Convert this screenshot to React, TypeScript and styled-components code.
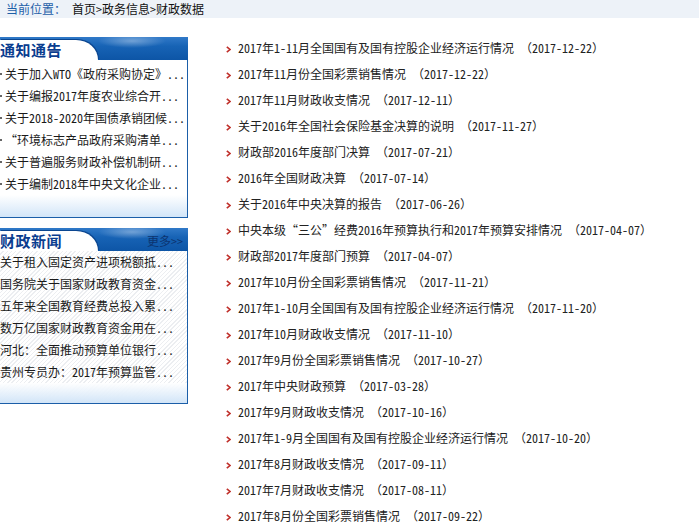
import styled, { createGlobalStyle } from "styled-components";

const GlobalStyle = createGlobalStyle`
  html, body {
    margin: 0;
    padding: 0;
    background: #fff;
  }
  body {
    font-family: "Noto Sans CJK SC", "Noto Sans", sans-serif;
    font-size: 12px;
    color: #222;
    font-feature-settings: "hwid";
  }
`;

const Breadcrumb = styled.div`
  height: 18px;
  line-height: 18px;
  background: #edf2f8;
  padding-left: 6px;
  white-space: nowrap;
`;

const CrumbLabel = styled.span`
  color: #1d5fa8;
`;

const CrumbPath = styled.span`
  margin-left: 6px;
  color: #111;
`;

const Main = styled.div`
  display: flex;
  align-items: flex-start;
`;

const Sidebar = styled.div`
  width: 188px;
  flex: none;
  padding-top: 19px;
  display: flex;
  flex-direction: column;
  gap: 10px;
`;

const Panel = styled.div`
  display: flex;
  flex-direction: column;
`;

const PanelHeader = styled.div`
  height: 23px;
  display: flex;
  align-items: flex-end;
  justify-content: space-between;
  background:
    radial-gradient(ellipse 34px 7px at 132px 4px, rgba(255, 255, 255, 0.35), transparent),
    linear-gradient(to bottom, #3079c8 0%, #1763b5 40%, #0d55a6 100%);
`;

const Tab = styled.div`
  width: 98px;
  height: 20px;
  background: #fff;
  border-top-right-radius: 22px 20px;
  box-shadow: 1px -1px 0 #0b4690;
`;

const PanelTitle = styled.span`
  display: block;
  line-height: 20px;
  font-size: 15px;
  font-weight: bold;
  color: #0a3d8f;
  letter-spacing: 0.5px;
`;

const More = styled.span`
  line-height: 20px;
  padding-right: 5px;
  color: #0c3470;
`;

const PanelBody = styled.div<{ $hatched?: boolean; $padTop: number }>`
  padding-top: ${(p) => p.$padTop}px;
  border-right: 1px solid #1b5ea8;
  border-bottom: 1px solid #1b5ea8;
  background: ${(p) =>
    p.$hatched
      ? "repeating-linear-gradient(135deg, #fff 0 2px, #eceef1 2px 3px)"
      : "#fff"};
`;

const SideItem = styled.div<{ $dot?: boolean }>`
  height: 22px;
  line-height: 22px;
  white-space: nowrap;
  overflow: hidden;
  color: #1a1a1a;
  padding-left: ${(p) => (p.$dot ? 5 : 0)}px;
  position: relative;

  &::before {
    content: "";
    display: ${(p) => (p.$dot ? "block" : "none")};
    position: absolute;
    left: 0;
    top: 10px;
    width: 2px;
    height: 2px;
    background: #666;
  }
`;

const PanelFooter = styled.div<{ $h: number }>`
  height: ${(p) => p.$h}px;
  background: linear-gradient(to bottom, rgba(255, 255, 255, 0.9), #d2e5f8);
`;

const NewsList = styled.ul`
  list-style: none;
  margin: 0 0 0 38px;
  padding: 17px 0 0 0;
`;

const NewsItem = styled.li`
  height: 26px;
  line-height: 26px;
  display: flex;
  align-items: center;
  white-space: nowrap;
  color: #222;
`;

const Bullet = styled.svg`
  width: 5px;
  height: 7px;
  margin-right: 7px;
  flex: none;
  margin-top: 2px;
`;

const NewsDate = styled.span`
  margin-left: 6px;
`;

/* full-width parentheses, as on the original page */
const Paren = styled.span`
  font-feature-settings: normal;
`;

const notices = [
  "关于加入WTO《政府采购协定》...",
  "关于编报2017年度农业综合开...",
  "关于2018-2020年国债承销团候...",
  "“环境标志产品政府采购清单...",
  "关于普遍服务财政补偿机制研...",
  "关于编制2018年中央文化企业...",
];

const finance = [
  "关于租入固定资产进项税额抵...",
  "国务院关于国家财政教育资金...",
  "五年来全国教育经费总投入累...",
  "数万亿国家财政教育资金用在...",
  "河北：全面推动预算单位银行...",
  "贵州专员办：2017年预算监管...",
];

const news: [string, string][] = [
  ["2017年1-11月全国国有及国有控股企业经济运行情况", "2017-12-22"],
  ["2017年11月份全国彩票销售情况", "2017-12-22"],
  ["2017年11月财政收支情况", "2017-12-11"],
  ["关于2016年全国社会保险基金决算的说明", "2017-11-27"],
  ["财政部2016年度部门决算", "2017-07-21"],
  ["2016年全国财政决算", "2017-07-14"],
  ["关于2016年中央决算的报告", "2017-06-26"],
  ["中央本级“三公”经费2016年预算执行和2017年预算安排情况", "2017-04-07"],
  ["财政部2017年度部门预算", "2017-04-07"],
  ["2017年10月份全国彩票销售情况", "2017-11-21"],
  ["2017年1-10月全国国有及国有控股企业经济运行情况", "2017-11-20"],
  ["2017年10月财政收支情况", "2017-11-10"],
  ["2017年9月份全国彩票销售情况", "2017-10-27"],
  ["2017年中央财政预算", "2017-03-28"],
  ["2017年9月财政收支情况", "2017-10-16"],
  ["2017年1-9月全国国有及国有控股企业经济运行情况", "2017-10-20"],
  ["2017年8月财政收支情况", "2017-09-11"],
  ["2017年7月财政收支情况", "2017-08-11"],
  ["2017年8月份全国彩票销售情况", "2017-09-22"],
];

export default function App() {
  return (
    <>
      <GlobalStyle />
      <Breadcrumb>
        <CrumbLabel>当前位置：</CrumbLabel>
        <CrumbPath>首页&gt;政务信息&gt;财政数据</CrumbPath>
      </Breadcrumb>
      <Main>
        <Sidebar>
          <Panel>
            <PanelHeader>
              <Tab>
                <PanelTitle>通知通告</PanelTitle>
              </Tab>
            </PanelHeader>
            <PanelBody $padTop={3}>
              {notices.map((t) => (
                <SideItem key={t} $dot>
                  {t}
                </SideItem>
              ))}
              <PanelFooter $h={22} />
            </PanelBody>
          </Panel>
          <Panel>
            <PanelHeader>
              <Tab>
                <PanelTitle>财政新闻</PanelTitle>
              </Tab>
              <More>更多&gt;&gt;</More>
            </PanelHeader>
            <PanelBody $hatched $padTop={0}>
              {finance.map((t) => (
                <SideItem key={t}>{t}</SideItem>
              ))}
              <PanelFooter $h={20} />
            </PanelBody>
          </Panel>
        </Sidebar>
        <NewsList>
          {news.map(([title, date]) => (
            <NewsItem key={title + date}>
              <Bullet viewBox="0 0 5 7">
                <path d="M0.8 0.8 L4 3.5 L0.8 6.2" fill="none" stroke="#c0302a" strokeWidth="1.6" />
              </Bullet>
              {title}
              <NewsDate>
                <Paren>（</Paren>
                {date}
                <Paren>）</Paren>
              </NewsDate>
            </NewsItem>
          ))}
        </NewsList>
      </Main>
    </>
  );
}
